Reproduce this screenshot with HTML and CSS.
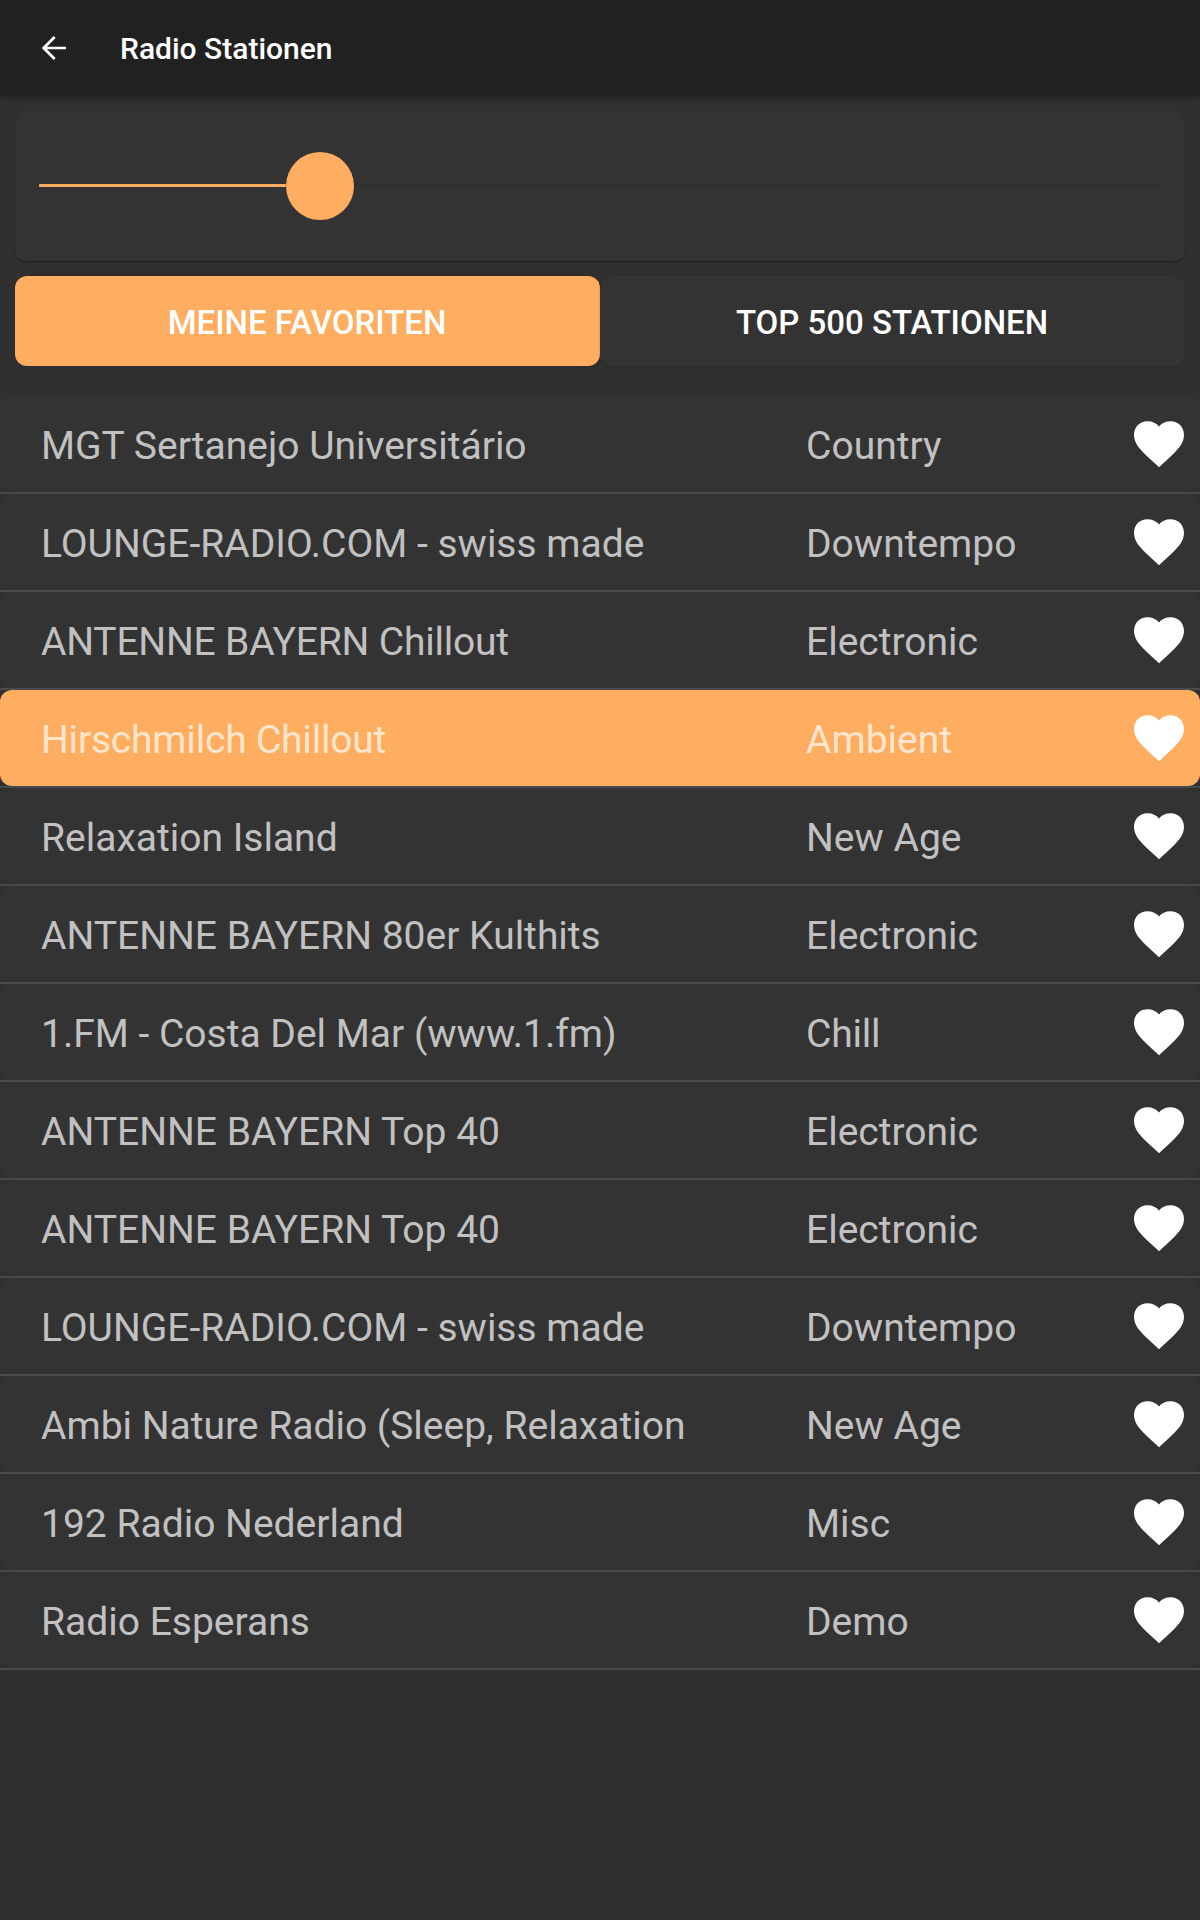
FILE: index.html
```html
<!DOCTYPE html>
<html lang="de">
<head>
<meta charset="utf-8">
<title>Radio Stationen</title>
<link rel="stylesheet" href="styles.css">
</head>
<body>
<svg class="defs" width="0" height="0">
  <symbol id="heart" viewBox="0 0 50 47"><path d="M25 46.3C22.5 43.6 19 40.6 14.5 36.5C6.500 29 0 22.500 0 14C0 6 5.800 0.300 13.500 0.300C18.300 0.300 22.600 2.300 25 5.500C27.400 2.300 31.700 0.300 36.500 0.300C44.200 0.300 50 6 50 14C50 22.500 43.500 29 35.500 36.500C31 40.600 27.500 43.600 25 46.300Z" fill="#fff"/></symbol>
</svg>
<header class="app-bar">
  <svg class="back" width="24" height="24" viewBox="0 0 24 24"><path d="M24 12H2M12.700 1L1.700 12L12.700 23" fill="none" stroke="#fff" stroke-width="2.700"/></svg>
  <h1 class="title">Radio Stationen</h1>
</header>
<main>
  <section class="volume">
    <div class="played"></div>
    <div class="thumb"></div>
    <div class="track"></div>
  </section>
  <nav class="tabs">
    <button class="tab active"><span class="tab-label">MEINE FAVORITEN</span></button>
    <button class="tab"><span class="tab-label">TOP 500 STATIONEN</span></button>
  </nav>
  <ul class="stations">
    <li class="row"><div class="station"><span class="name">MGT Sertanejo Universitário</span><span class="genre">Country</span><svg class="heart"><use href="#heart"/></svg></div></li>
    <li class="row"><div class="station"><span class="name">LOUNGE-RADIO.COM - swiss made</span><span class="genre">Downtempo</span><svg class="heart"><use href="#heart"/></svg></div></li>
    <li class="row"><div class="station"><span class="name tight">ANTENNE BAYERN Chillout</span><span class="genre">Electronic</span><svg class="heart"><use href="#heart"/></svg></div></li>
    <li class="row"><div class="station playing"><span class="name tight">Hirschmilch Chillout</span><span class="genre">Ambient</span><svg class="heart"><use href="#heart"/></svg></div></li>
    <li class="row"><div class="station"><span class="name">Relaxation Island</span><span class="genre">New Age</span><svg class="heart"><use href="#heart"/></svg></div></li>
    <li class="row"><div class="station"><span class="name">ANTENNE BAYERN 80er Kulthits</span><span class="genre">Electronic</span><svg class="heart"><use href="#heart"/></svg></div></li>
    <li class="row"><div class="station"><span class="name">1.FM - Costa Del Mar (www.1.fm)</span><span class="genre tight">Chill</span><svg class="heart"><use href="#heart"/></svg></div></li>
    <li class="row"><div class="station"><span class="name">ANTENNE BAYERN Top 40</span><span class="genre">Electronic</span><svg class="heart"><use href="#heart"/></svg></div></li>
    <li class="row"><div class="station"><span class="name">ANTENNE BAYERN Top 40</span><span class="genre">Electronic</span><svg class="heart"><use href="#heart"/></svg></div></li>
    <li class="row"><div class="station"><span class="name">LOUNGE-RADIO.COM - swiss made</span><span class="genre">Downtempo</span><svg class="heart"><use href="#heart"/></svg></div></li>
    <li class="row"><div class="station"><span class="name">Ambi Nature Radio (Sleep, Relaxation</span><span class="genre">New Age</span><svg class="heart"><use href="#heart"/></svg></div></li>
    <li class="row"><div class="station"><span class="name">192 Radio Nederland</span><span class="genre">Misc</span><svg class="heart"><use href="#heart"/></svg></div></li>
    <li class="row"><div class="station"><span class="name">Radio Esperans</span><span class="genre">Demo</span><svg class="heart"><use href="#heart"/></svg></div></li>
  </ul>
</main>
</body>
</html>
```
FILE: styles.css
```css
* { box-sizing: border-box; }

body {
  margin: 0;
  min-height: 1920px;
  background: #303030;
  color: #fff;
  font-family: Roboto, "Noto Sans", sans-serif;
}

.defs { display: block; height: 0; }

.app-bar {
  display: flex;
  align-items: center;
  gap: 54px;
  height: 96px;
  padding-left: 42px;
  background: #212121;
  box-shadow: 0 1px 6px rgba(0, 0, 0, 0.35);
}

.title {
  margin: 0;
  padding: 1px 0 0 0;
  font-size: 30px;
  font-weight: 500;
  line-height: 36px;
}

.volume {
  display: flex;
  align-items: center;
  height: 150px;
  margin: 15px 15px 0;
  padding: 0 24px;
  border-radius: 10px;
  background: #333;
  box-shadow: 0 1px 2px rgba(0, 0, 0, 0.4);
}

.played {
  width: 247px;
  height: 3px;
  margin-bottom: 1px;
  border-radius: 1px;
  background: #ffad60;
}

.thumb {
  width: 68px;
  height: 68px;
  border-radius: 50%;
  background: #ffad60;
}

.track {
  flex: 1;
  height: 3px;
  margin-bottom: 1px;
  background: #2f2f2f;
}

.tabs {
  display: flex;
  margin: 15px 15px 30px;
}

.tab {
  flex: 1;
  height: 90px;
  padding: 3px 1px 0 0;
  border: 0;
  border-radius: 12px;
  background: #333;
  color: #fff;
  font: 500 33px/40px Roboto, "Noto Sans", sans-serif;
  box-shadow: 0 0 2px rgba(0, 0, 0, 0.25);
}

.tab.active { background: #ffad60; }

.stations {
  margin: 0;
  padding: 0;
  list-style: none;
}

.row { border-bottom: 2px solid #4a4a4a; }

.station {
  display: grid;
  grid-template-columns: 765px 1fr 50px;
  align-items: center;
  height: 96px;
  padding: 0 16px 0 41px;
  border-radius: 12px;
  background: #333;
  color: #c1c1c1;
  font-size: 39px;
  line-height: 48px;
  white-space: nowrap;
}

.name, .genre { padding-top: 4px; }

.tight { letter-spacing: -0.2px; }

.playing {
  background: #ffad60;
  color: #ffe6cc;
}

.heart {
  width: 50px;
  height: 47px;
}
```
